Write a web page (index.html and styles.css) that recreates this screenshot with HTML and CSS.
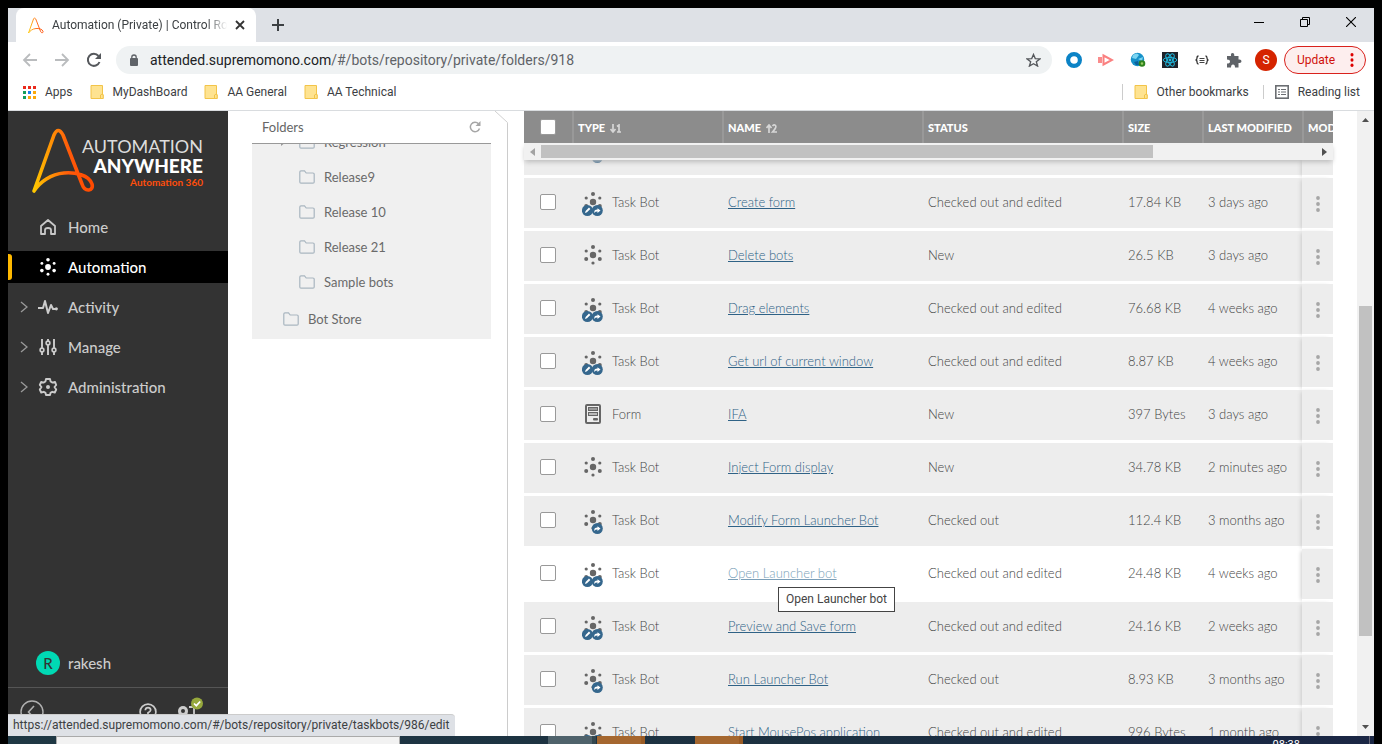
FILE: index.html
```html
<!DOCTYPE html>
<html lang="en">
<head>
<meta charset="utf-8">
<title>Automation (Private) | Control Room</title>
<link rel="stylesheet" href="styles.css">
</head>
<body>
<svg class="defs" aria-hidden="true">
  <defs>
    <linearGradient id="flame" x1="0" y1="0" x2="1" y2="0"><stop offset="0" stop-color="#ffc800"/><stop offset=".6" stop-color="#ff5a0a"/><stop offset="1" stop-color="#ff4a00"/></linearGradient>
    <symbol id="mark" viewBox="0 0 64 66"><path d="M2 63 22 7Q26-2 31 7L50 56C53 65 62 63 60 56 57 47 43 44 32 45 19 46 8 54 2 63Z" fill="none" stroke="url(#flame)" stroke-width="3.600" stroke-linejoin="round"/></symbol>
    <symbol id="note" viewBox="0 0 14 16"><path d="M1 1.500H12.500V10L13 10.500V14.500H1Z" fill="#fee391" stroke="#f2c449"/><path d="M10.500 14.500V11Q12 9.500 13.200 11V14.500Z" fill="#fee391" stroke="#f2c449"/></symbol>
    <symbol id="folder" viewBox="0 0 16 14"><path d="M.8 2Q.8.8 2 .8H5.500L7.200 3H14Q15.200 3 15.200 4V12Q15.200 13.200 14 13.200H2Q.8 13.200.8 12Z" fill="none" stroke="#a9b6c0" stroke-width="1.200"/></symbol>
    <symbol id="dots" viewBox="0 0 22 24"><circle cx="11" cy="10" r="3.200"/><circle cx="11" cy="2" r="2"/><circle cx="4.200" cy="6" r="1.600"/><circle cx="17.800" cy="6" r="1.600"/><circle cx="4.200" cy="14" r="2"/><circle cx="17.800" cy="14" r="2"/><circle cx="11" cy="18" r="1.600"/></symbol>
    <symbol id="share" viewBox="0 0 22 24"><circle cx="15.300" cy="18.500" r="5.500" fill="#35678d"/><path d="M12.300 21Q11.800 17.600 15.500 17.600V16.200L18.500 18.600 15.500 21V19.600Q13.500 19.400 12.300 21Z" fill="#fff"/></symbol>
    <symbol id="bot" viewBox="0 0 22 24"><use href="#dots" fill="#666"/></symbol>
    <symbol id="bot-out" viewBox="0 0 22 24"><use href="#dots" fill="#666"/><use href="#share"/></symbol>
    <symbol id="bot-edit" viewBox="0 0 22 24"><use href="#dots" fill="#666"/><circle cx="5.400" cy="18.500" r="5.500" fill="#35678d"/><path d="M3 21 3.600 19 7 15.600 8.300 17 5 20.300Z" fill="#fff"/><use href="#share"/></symbol>
    <symbol id="form" viewBox="0 0 22 24"><rect x="4" y="1" width="14" height="18" rx="1" fill="#eee" stroke="#666" stroke-width="2"/><rect x="6.500" y="3.500" width="9" height="3" fill="#999" stroke="#666"/><rect x="6.500" y="8.500" width="9" height="3" fill="#bbb" stroke="#666"/><rect x="11" y="14" width="5" height="2.500" rx="1" fill="#666"/></symbol>
    <symbol id="chev" viewBox="0 0 8 12"><path d="M1 1 7 6 1 11" fill="none" stroke="#9a9a9a" stroke-width="1.300"/></symbol>
    <symbol id="more" viewBox="0 0 4 16"><circle cx="2" cy="2" r="1.900"/><circle cx="2" cy="8" r="1.900"/><circle cx="2" cy="14" r="1.900"/></symbol>
  </defs>
</svg>

<div class="window">
  <header class="tabstrip">
    <div class="tab">
      <svg width="16" height="17"><use href="#mark"/></svg>
      <span class="tab-title">Automation (Private) | Control Room</span>
      <button class="plain" aria-label="Close tab"><svg width="10" height="10" viewBox="0 0 10 10"><path d="M1 1 9 9M9 1 1 9" stroke="#333" stroke-width="1.800"/></svg></button>
    </div>
    <button class="plain new-tab" aria-label="New tab"><svg width="12" height="12" viewBox="0 0 12 12"><path d="M6 0V12M0 6H12" stroke="#3c4043" stroke-width="2"/></svg></button>
    <div class="win-controls">
      <button class="plain" aria-label="Minimize"><svg width="10" height="10" viewBox="0 0 10 10"><path d="M0 5.500H10" stroke="#000"/></svg></button>
      <button class="plain" aria-label="Restore"><svg width="10" height="10" viewBox="0 0 10 10"><path d="M.5 2.500H7.500V9.500H.5ZM2.500 2.500V.5H9.500V7.500H7.500" fill="none" stroke="#000"/></svg></button>
      <button class="plain" aria-label="Close"><svg width="10" height="10" viewBox="0 0 10 10"><path d="M0 0 10 10M10 0 0 10" stroke="#000" stroke-width="1.100"/></svg></button>
    </div>
  </header>

  <div class="toolbar">
    <div class="history">
      <button class="plain" aria-label="Back"><svg width="16" height="14" viewBox="0 0 16 14"><path d="M8 1 2 7 8 13M2 7H15" fill="none" stroke="#babcbe" stroke-width="1.800"/></svg></button>
      <button class="plain" aria-label="Forward"><svg width="16" height="14" viewBox="0 0 16 14"><path d="M8 1 14 7 8 13M14 7H1" fill="none" stroke="#babcbe" stroke-width="1.800"/></svg></button>
      <button class="plain" aria-label="Reload"><svg width="16" height="16" viewBox="0 0 16 16"><path d="M13.500 10A6 6 0 1 1 12.500 4" fill="none" stroke="#55585c" stroke-width="2"/><path d="M15 1V7H9Z" fill="#55585c"/></svg></button>
    </div>
    <div class="omnibox">
      <svg width="10" height="13" viewBox="0 0 10 13"><rect x="1" y="4" width="8" height="8" rx="1" fill="#5f6368"/><path d="M2.800 5V3.200a2.200 2.200 0 0 1 4.400 0V5" fill="none" stroke="#5f6368" stroke-width="1.300"/></svg>
      <span class="url"><b>attended.supremomono.com</b>/#/bots/repository/private/folders/918</span>
      <button class="plain" aria-label="Bookmark this page"><svg width="15" height="14" viewBox="0 0 16 15"><path d="M8 1.500 9.900 6 15 6.300 11 9.400 12.400 14 8 11.400 3.600 14 5 9.400 1 6.300 6.100 6Z" fill="none" stroke="#55585c" stroke-width="1.400"/></svg></button>
    </div>
    <div class="extensions">
      <svg width="16" height="16" viewBox="0 0 16 16"><circle cx="8" cy="8" r="5.900" fill="#fff" stroke="#0b83c6" stroke-width="4.200"/></svg>
      <svg width="16" height="14" viewBox="0 0 16 14"><path d="M0 4H4V10H0Z" fill="#fa8c8c"/><path d="M5.500 2.500 14 7 5.500 11.500Z" fill="none" stroke="#fa8080" stroke-width="2"/></svg>
      <svg width="16" height="16" viewBox="0 0 16 16"><circle cx="7.500" cy="7.500" r="6.700" fill="#1691c9"/><path d="M3 3Q7 0 9 3L6 7 2 6ZM8 7 13 5 12 9Z" fill="#7bd4f1"/><path d="M4 10 8 9 9 13 6 13Z" fill="#0b609c"/><circle cx="12" cy="11.500" r="2.300" fill="#9c6" stroke="#2e831d" stroke-width="2"/></svg>
      <svg width="16" height="16" viewBox="0 0 16 16"><rect width="16" height="16" fill="#20232a"/><g fill="none" stroke="#20b7dc"><ellipse cx="8" cy="8" rx="6.800" ry="2.600"/><ellipse cx="8" cy="8" rx="6.800" ry="2.600" transform="rotate(60 8 8)"/><ellipse cx="8" cy="8" rx="6.800" ry="2.600" transform="rotate(120 8 8)"/></g><circle cx="8" cy="8" r="1.400" fill="#20b7dc"/></svg>
      <svg width="16" height="10" viewBox="0 0 16 10"><path d="M4.500 1Q3 1 3 3T1.500 5Q3 5 3 7T4.500 9M11.500 1Q13 1 13 3T14.500 5Q13 5 13 7T11.500 9" fill="none" stroke="#333" stroke-width="1.300"/><path d="M5.500 3.500H10.500M5.500 5.500H10.500M5.500 7.500H10.500" stroke="#444"/></svg>
      <svg width="16" height="15" viewBox="0 0 16 15"><path d="M1 3H5Q4.500 0 6.500 0T8.300 3H12.500V6.500Q15.500 6 15.500 8.300T12.500 10V14.500H9Q9 11.500 7 11.500T5 14.500H1V10.500Q4 10.500 4 8.500T1 6.500Z" fill="#5f6368"/></svg>
    </div>
    <button class="avatar-s">S</button>
    <button class="update">Update <svg width="4" height="14" viewBox="0 0 4 16" fill="#d00"><use href="#more"/></svg></button>
  </div>

  <nav class="bookmarks">
    <a href="#" class="apps"><svg width="13" height="13" viewBox="0 0 13 13"><path d="M0 0h3v3H0zM5 0h3v3H5zM10 0h3v3h-3z" fill="#ea2a1c"/><path d="M0 5h3v3H0zM0 10h3v3H0z" fill="#149e5c"/><path d="M5 5h3v3H5z" fill="#1a80ee"/><path d="M10 5h3v3h-3zM5 10h3v3H5zM10 10h3v3h-3z" fill="#fba90a"/></svg>Apps</a>
    <a href="#"><svg width="14" height="16"><use href="#note"/></svg>MyDashBoard</a>
    <a href="#"><svg width="14" height="16"><use href="#note"/></svg>AA General</a>
    <a href="#"><svg width="14" height="16"><use href="#note"/></svg>AA Technical</a>
    <a href="#" class="other"><svg width="14" height="16"><use href="#note"/></svg>Other bookmarks</a>
    <a href="#" class="reading"><svg width="14" height="14" viewBox="0 0 14 14"><rect x=".8" y=".8" width="12.400" height="12.400" fill="none" stroke="#6b6e72" stroke-width="1.600"/><path d="M3 4.500H5M3 7H5M3 9.500H5M6 4.500H11M6 7H11M6 9.500H11" stroke="#6b6e72" stroke-width="1.200"/></svg>Reading list</a>
  </nav>

  <div class="app">
    <aside class="sidebar">
      <div class="logo">
        <svg width="64" height="66"><use href="#mark"/></svg>
        <div class="wordmark"><span class="w1">AUTOMATION</span><span class="w2">ANYWHERE</span><span class="w3">Automation 360</span></div>
      </div>
      <nav class="menu">
        <a href="#"><i></i><svg width="20" height="18" viewBox="0 0 20 18"><path d="M3 8 10 2 17 8V16H13V12Q13 10 10 10T7 12V16H3Z" fill="none" stroke="#c8c8c8" stroke-width="1.800" stroke-linejoin="round"/></svg>Home</a>
        <a href="#" class="active"><i></i><svg width="20" height="18" viewBox="1 0 20 20" fill="#fff"><use href="#dots" width="22" height="24"/></svg>Automation</a>
        <a href="#"><i><svg width="8" height="12"><use href="#chev"/></svg></i><svg width="20" height="16" viewBox="0 0 20 16"><path d="M0 9H5L7 2 10 14 13 6 15 10H18" fill="none" stroke="#ccc" stroke-width="2" stroke-linejoin="round"/><circle cx="18.300" cy="9.800" r="1.600" fill="#ccc"/></svg>Activity</a>
        <a href="#"><i><svg width="8" height="12"><use href="#chev"/></svg></i><svg width="20" height="16" viewBox="0 0 20 16"><path d="M4 0V9M4 13V16M10 0V2M10 6V16M16 0V9M16 13V16" stroke="#ccc" stroke-width="1.900"/><g fill="none" stroke="#ccc" stroke-width="1.600"><circle cx="4" cy="11" r="1.900"/><circle cx="10" cy="4" r="1.900"/><circle cx="16" cy="11" r="1.900"/></g></svg>Manage</a>
        <a href="#"><i><svg width="8" height="12"><use href="#chev"/></svg></i><svg width="20" height="18" viewBox="0 0 20 18"><path d="M8 1H12L12.600 3.500 14.500 4.600 17 3.900 18.200 7 16.500 9 18.200 11.500 16.800 14.500 14.300 13.800 12.500 14.900 12 17H8L7.500 14.900 5.700 13.800 3.200 14.500 1.800 11.500 3.500 9 1.800 7 3.200 3.900 5.500 4.600 7.400 3.500Z" fill="none" stroke="#ccc" stroke-width="1.900" stroke-linejoin="round"/><circle cx="10" cy="9" r="2" fill="#ccc"/></svg>Administration</a>
      </nav>
      <div class="user"><span class="avatar">R</span>rakesh</div>
      <div class="side-foot">
        <button class="plain" aria-label="Collapse"><svg width="24" height="24" viewBox="0 0 24 24"><circle cx="12" cy="12" r="11" fill="none" stroke="#b0b0b0" stroke-width="1.400"/><path d="M14 6 8.500 12 14 18" fill="none" stroke="#b0b0b0" stroke-width="1.600"/></svg></button>
        <button class="plain help" aria-label="Help"><svg width="18" height="18" viewBox="0 0 18 18"><circle cx="9" cy="9" r="7.900" fill="none" stroke="#ccc" stroke-width="1.700"/><path d="M6.300 7.200Q6.500 4.600 9 4.600T11.700 7Q11.700 8.300 9 9.800V11.300" fill="none" stroke="#ccc" stroke-width="1.700"/><circle cx="9" cy="13.500" r="1" fill="#ccc"/></svg></button>
        <button class="plain" aria-label="Connection"><svg width="27" height="30" viewBox="0 0 27 30"><path d="M6 25Q1 18 1 14A5 5 0 0 1 11 14Q11 18 6 25Z" fill="#ccc"/><circle cx="6" cy="14" r="2" fill="#333"/><path d="M12 10H17V24" fill="none" stroke="#ccc" stroke-width="1.800"/><circle cx="20" cy="6.500" r="6" fill="#96a83c"/><path d="M17 6.500 19.300 8.700 23.200 4.500" fill="none" stroke="#fff" stroke-width="1.700"/></svg></button>
      </div>
    </aside>

    <section class="folders">
      <div class="folders-head"><h2>Folders</h2><button class="plain" aria-label="Refresh"><svg width="12" height="12" viewBox="0 0 12 12"><path d="M10.500 7.500A4.700 4.700 0 1 1 9.500 2.800" fill="none" stroke="#a6a6a6" stroke-width="1.500"/><path d="M11.500 0V5H6.500Z" fill="#a6a6a6"/></svg></button></div>
      <div class="tree-view">
        <ul class="tree">
          <li><i><svg width="5" height="8" viewBox="0 0 5 8"><path d="M0 0 5 4 0 8Z" fill="#999"/></svg></i><svg width="16" height="14"><use href="#folder"/></svg>Regression</li>
          <li><i></i><svg width="16" height="14"><use href="#folder"/></svg>Release9</li>
          <li><i></i><svg width="16" height="14"><use href="#folder"/></svg>Release 10</li>
          <li><i></i><svg width="16" height="14"><use href="#folder"/></svg>Release 21</li>
          <li><i></i><svg width="16" height="14"><use href="#folder"/></svg>Sample bots</li>
          <li class="root"><svg width="16" height="14"><use href="#folder"/></svg>Bot Store</li>
        </ul>
      </div>
    </section>

    <div class="divider"><svg width="13" height="13" viewBox="0 0 13 13"><path d="M0 0 12.500 11.500V13" fill="none" stroke="#d0d0d0"/></svg><span></span></div>

    <main class="list">
      <table class="grid head">
        <colgroup><col class="c-check"><col class="c-type"><col><col><col class="c-size"><col class="c-date"><col class="c-more"></colgroup>
        <thead><tr>
          <th><input type="checkbox" aria-label="Select all"></th>
          <th>TYPE <svg width="11" height="9" viewBox="0 0 11 9" fill="none" stroke="#d6d6d6" stroke-width="1.700"><path d="M3 0V8M.5 5 3 8 5.500 5M7 2.500 9 1V8M7 8H11"/></svg></th>
          <th>NAME <svg width="11" height="9" viewBox="0 0 11 9" fill="none" stroke="#d6d6d6" stroke-width="1.700"><path d="M3 9V1M.5 4 3 1 5.500 4M6.500 2Q8 0 9.500 1.500T6.500 8H11"/></svg></th>
          <th>STATUS</th><th>SIZE</th><th>LAST MODIFIED</th><th>MODIFIED BY</th>
        </tr></thead>
      </table>
      <div class="hscroll"><svg width="5" height="8" viewBox="0 0 5 8"><path d="M5 0 0 4 5 8Z" fill="#a3a3a3"/></svg><div class="htrack"><div class="hthumb"></div></div><svg width="5" height="8" viewBox="0 0 5 8"><path d="M0 0 5 4 0 8Z" fill="#505050"/></svg></div>
      <div class="rows">
        <table class="grid body">
          <colgroup><col class="c-check"><col class="c-type"><col><col><col class="c-size"><col class="c-date"><col class="c-more"></colgroup>
          <tbody>
            <tr><td></td><td><div class="kind"><svg class="ico"><use href="#bot-out"/></svg></div></td><td></td><td></td><td></td><td></td><td></td></tr>
            <tr><td><input type="checkbox" aria-label="Create form"></td><td><div class="kind"><svg class="ico"><use href="#bot-edit"/></svg>Task Bot</div></td><td><a href="#">Create form</a></td><td>Checked out and edited</td><td>17.84 KB</td><td>3 days ago</td><td><button class="plain" aria-label="Actions"><svg width="4" height="16"><use href="#more"/></svg></button></td></tr>
            <tr><td><input type="checkbox" aria-label="Delete bots"></td><td><div class="kind"><svg class="ico"><use href="#bot"/></svg>Task Bot</div></td><td><a href="#">Delete bots</a></td><td>New</td><td>26.5 KB</td><td>3 days ago</td><td><button class="plain" aria-label="Actions"><svg width="4" height="16"><use href="#more"/></svg></button></td></tr>
            <tr><td><input type="checkbox" aria-label="Drag elements"></td><td><div class="kind"><svg class="ico"><use href="#bot-edit"/></svg>Task Bot</div></td><td><a href="#">Drag elements</a></td><td>Checked out and edited</td><td>76.68 KB</td><td>4 weeks ago</td><td><button class="plain" aria-label="Actions"><svg width="4" height="16"><use href="#more"/></svg></button></td></tr>
            <tr><td><input type="checkbox" aria-label="Get url of current window"></td><td><div class="kind"><svg class="ico"><use href="#bot-edit"/></svg>Task Bot</div></td><td><a href="#">Get url of current window</a></td><td>Checked out and edited</td><td>8.87 KB</td><td>4 weeks ago</td><td><button class="plain" aria-label="Actions"><svg width="4" height="16"><use href="#more"/></svg></button></td></tr>
            <tr><td><input type="checkbox" aria-label="IFA"></td><td><div class="kind"><svg class="ico"><use href="#form"/></svg>Form</div></td><td><a href="#">IFA</a></td><td>New</td><td>397 Bytes</td><td>3 days ago</td><td><button class="plain" aria-label="Actions"><svg width="4" height="16"><use href="#more"/></svg></button></td></tr>
            <tr><td><input type="checkbox" aria-label="Inject Form display"></td><td><div class="kind"><svg class="ico"><use href="#bot"/></svg>Task Bot</div></td><td><a href="#">Inject Form display</a></td><td>New</td><td>34.78 KB</td><td>2 minutes ago</td><td><button class="plain" aria-label="Actions"><svg width="4" height="16"><use href="#more"/></svg></button></td></tr>
            <tr><td><input type="checkbox" aria-label="Modify Form Launcher Bot"></td><td><div class="kind"><svg class="ico"><use href="#bot-out"/></svg>Task Bot</div></td><td><a href="#">Modify Form Launcher Bot</a></td><td>Checked out</td><td>112.4 KB</td><td>3 months ago</td><td><button class="plain" aria-label="Actions"><svg width="4" height="16"><use href="#more"/></svg></button></td></tr>
            <tr class="hovered"><td><input type="checkbox" aria-label="Open Launcher bot"></td><td><div class="kind"><svg class="ico"><use href="#bot-edit"/></svg>Task Bot</div></td><td><a href="#">Open Launcher bot</a><span class="tooltip" role="tooltip">Open Launcher bot</span></td><td>Checked out and edited</td><td>24.48 KB</td><td>4 weeks ago</td><td><button class="plain" aria-label="Actions"><svg width="4" height="16"><use href="#more"/></svg></button></td></tr>
            <tr><td><input type="checkbox" aria-label="Preview and Save form"></td><td><div class="kind"><svg class="ico"><use href="#bot-edit"/></svg>Task Bot</div></td><td><a href="#">Preview and Save form</a></td><td>Checked out and edited</td><td>24.16 KB</td><td>2 weeks ago</td><td><button class="plain" aria-label="Actions"><svg width="4" height="16"><use href="#more"/></svg></button></td></tr>
            <tr><td><input type="checkbox" aria-label="Run Launcher Bot"></td><td><div class="kind"><svg class="ico"><use href="#bot-out"/></svg>Task Bot</div></td><td><a href="#">Run Launcher Bot</a></td><td>Checked out</td><td>8.93 KB</td><td>3 months ago</td><td><button class="plain" aria-label="Actions"><svg width="4" height="16"><use href="#more"/></svg></button></td></tr>
            <tr><td><input type="checkbox" aria-label="Start MousePos application"></td><td><div class="kind"><svg class="ico"><use href="#bot-edit"/></svg>Task Bot</div></td><td><a href="#">Start MousePos application</a></td><td>Checked out and edited</td><td>996 Bytes</td><td>1 month ago</td><td><button class="plain" aria-label="Actions"><svg width="4" height="16"><use href="#more"/></svg></button></td></tr>
          </tbody>
        </table>
      </div>
    </main>

    <div class="vscroll"><svg width="7" height="4" viewBox="0 0 7 4"><path d="M0 4 3.500 0 7 4Z" fill="#505050"/></svg><div class="vtrack"><div class="vthumb"></div></div><svg width="7" height="4" viewBox="0 0 7 4"><path d="M0 0 3.500 4 7 0Z" fill="#505050"/></svg></div>
    <div class="status">https://attended.supremomono.com/#/bots/repository/private/taskbots/986/edit</div>
  </div>
</div>
<footer class="taskbar">
  <div class="search"></div>
  <div class="task grey"></div><div class="task"></div><div class="task last"></div>
  <time>08:38</time>
</footer>
</body>
</html>
```
FILE: styles.css
```css
* { box-sizing: border-box; }
body {
  margin: 0;
  padding: 8px 8px 0;
  height: 100vh;
  display: flex;
  flex-direction: column;
  overflow: hidden;
  background: #000;
  font-family: Roboto, "Noto Sans", sans-serif;
  font-size: 12px;
  color: #3c4043;
}
svg { display: block; flex: none; }
a { color: inherit; text-decoration: none; }
i { font-style: normal; }
.defs { position: absolute; width: 0; height: 0; }
.plain { border: 0; padding: 0; background: none; display: flex; flex: none; }
.window { flex: 1; min-height: 0; display: flex; flex-direction: column; background: #fff; }

.tabstrip { display: flex; align-items: center; height: 34px; flex: none; background: #dee1e6; padding-left: 8px; }
.tab { display: flex; align-items: center; gap: 8px; width: 240px; height: 34px; padding: 0 11px 0 12px; background: #fff; border-radius: 8px 8px 0 0; }
.tab-title { flex: 1; overflow: hidden; white-space: nowrap; -webkit-mask-image: linear-gradient(90deg, #000 88%, transparent); mask-image: linear-gradient(90deg, #000 88%, transparent); }
.new-tab { margin-left: 16px; }
.win-controls { display: flex; gap: 36px; margin: 0 18px 6px auto; }

.toolbar { display: flex; align-items: center; height: 36px; flex: none; padding: 0 8px 0 14px; }
.history { display: flex; align-items: center; gap: 16px; }
.omnibox { flex: 1; display: flex; align-items: center; gap: 11px; height: 28px; margin-left: 14px; padding: 0 11px 0 13px; border-radius: 14px; background: #eff2f3; font-size: 14px; color: #5f6368; }
.url { flex: 1; white-space: nowrap; }
.url b { font-weight: 400; color: #202124; }
.extensions { display: flex; align-items: center; gap: 16px; margin: 0 13px 0 14px; }
.avatar-s { width: 22px; height: 22px; padding: 0; border: 0; border-radius: 50%; background: #d52400; color: #fff; font: 12px Roboto, sans-serif; }
.update { display: flex; align-items: center; justify-content: space-between; width: 82px; height: 28px; margin-left: 7px; padding: 0 11px 0 12px; border: 1px solid #d9211c; border-radius: 14px; background: #fdeeee; color: #d0110b; font: 12px Roboto, sans-serif; }

.bookmarks { display: flex; align-items: center; height: 33px; flex: none; padding: 0 14px 4px 15px; border-bottom: 1px solid #d9dcdf; }
.bookmarks a { display: flex; align-items: center; gap: 9px; margin-right: 17px; white-space: nowrap; }
.bookmarks .other, .bookmarks .reading { margin-right: 0; padding-left: 11px; border-left: 1px solid #ccc; }
.bookmarks .other { margin-left: auto; margin-right: 14px; }

.app { position: relative; flex: 1; min-height: 0; display: flex; overflow: hidden; font-family: Lato, "Open Sans", sans-serif; }
.sidebar { width: 220px; flex: none; display: flex; flex-direction: column; background: #333; color: #ccc; font-size: 15px; font-weight: 500; }
.logo { display: flex; align-items: flex-start; height: 100px; padding: 17px 25px 0 24px; }
.wordmark { flex: 1; display: flex; flex-direction: column; align-items: flex-end; padding-top: 8px; line-height: 20px; white-space: nowrap; margin-left: -24px; }
.w1 { font-size: 18px; font-weight: 400; color: #ddd; }
.w2 { font-size: 19px; font-weight: 900; color: #fff; }
.w3 { font-size: 10px; font-weight: 700; line-height: 12px; color: #ff4e0b; }
.menu { display: flex; flex-direction: column; gap: 8px; }
.menu a { display: flex; align-items: center; height: 32px; padding: 0 0 1px 12px; }
.menu i { width: 18px; }
.menu a > svg { margin-right: 10px; }
.menu .active { background: #000; color: #fff; }
.menu .active i { width: 4px; height: 26px; margin: 0 26px 0 -12px; border-radius: 0 3px 3px 0; background: #ffb900; }
.user { display: flex; align-items: center; gap: 8px; margin-top: auto; height: 48px; padding-left: 28px; }
.avatar { width: 24px; height: 24px; border-radius: 50%; background: #00d9b4; color: #333; text-align: center; line-height: 24px; }
.side-foot { display: flex; align-items: center; height: 49px; padding: 0 24px 0 12px; border-top: 1px solid #555; }
.help { margin-left: auto; margin-right: 20px; }

.folders { width: 239px; flex: none; margin-left: 24px; }
.folders-head { display: flex; align-items: center; justify-content: space-between; height: 33px; padding: 0 10px; border-bottom: 1px solid #999; }
.folders-head h2 { margin: 0; font-size: 13px; font-weight: 400; color: #666; }
.tree-view { height: 195px; overflow: hidden; background: #f0f0f0; }
.tree { margin: -20px 0 0; padding: 0; list-style: none; font-size: 13px; color: #6a6a6a; }
.tree li { display: flex; align-items: center; gap: 9px; height: 35px; padding-left: 29px; }
.tree i { width: 9px; }
.tree .root { height: 39px; padding-left: 31px; }

.divider { display: flex; flex-direction: column; width: 13px; flex: none; margin-left: 4px; }
.divider span { flex: 1; border-right: 1px solid #ccc; }

.list { flex: 1; min-width: 0; display: flex; flex-direction: column; margin: 0 24px 0 16px; }
.grid { width: 100%; table-layout: fixed; border-collapse: separate; border-spacing: 0; font-size: 13px; color: #6a6a6a; }
.c-check { width: 48px; }
.c-type { width: 150px; }
.c-size { width: 80px; }
.c-date { width: 100px; }
.c-more { width: 31px; }
.head { background: #8c8c8c; color: #fff; }
.head th { height: 32px; padding: 0 0 0 6px; text-align: left; font-size: 11px; font-weight: 900; white-space: nowrap; overflow: hidden; }
.head th + th { border-left: 2px solid #999; padding-left: 4px; }
.head svg { display: inline-block; margin-left: 2px; vertical-align: -1px; }
.grid input { appearance: none; display: block; width: 16px; height: 16px; margin: 0 auto; border: 1px solid #999; border-radius: 2px; background: #fff; }
.head input { margin-left: 10px; }
.hscroll { position: relative; z-index: 1; display: flex; align-items: center; gap: 6px; height: 17px; flex: none; padding: 0 6px; background: #f1f1f1; box-shadow: 0 3px 5px -1px #bbb; }
.htrack { flex: 1; }
.hthumb { width: 79%; height: 13px; background: #c1c1c1; }
.rows { flex: 1; min-height: 0; overflow: hidden; }
.body { margin-top: -35px; font-weight: 300; color: #444; }
.body td { height: 53px; padding: 0 0 2px 6px; border-bottom: 3px solid #fff; background: #ededed; white-space: nowrap; position: relative; }
.body td:first-child, .body td:last-child { padding: 0; }
.body td:first-child { padding-bottom: 2px; }
.body td:last-child { background-clip: padding-box; box-shadow: -3px 0 4px -2px #ccc; }
.body .plain { margin: 2px auto 0; fill: #a6a6a6; }
.body .hovered td { background: #fff; }
.body .hovered td:last-child { background: #ededed; background-clip: padding-box; }
.body a { color: #2f6286; text-decoration: underline; }
.body .hovered a { color: #7b9fb8; }
.kind { display: flex; align-items: center; gap: 8px; padding-left: 4px; }
.ico { width: 22px; height: 24px; margin-top: 4px; }
.tooltip { position: absolute; left: 56px; top: 38px; z-index: 2; padding: 0 7px; line-height: 23px; border: 1px solid #444; background: #fff; color: #444; font-family: Roboto, sans-serif; font-weight: 400; font-size: 12px; }

.vscroll { width: 17px; flex: none; display: flex; flex-direction: column; align-items: center; gap: 7px; padding: 7px 0; background: #f1f1f1; }
.vtrack { flex: 1; display: flex; flex-direction: column; width: 100%; padding: 0 2px; }
.vthumb { height: 56%; margin-top: 177px; background: #c1c1c1; }
.status { position: absolute; left: 0; bottom: 0; padding: 0 6px 0 5px; line-height: 21px; background: #dee1e6; border-top: 1px solid #ccc; border-radius: 0 4px 0 0; font-family: Roboto, sans-serif; font-size: 12px; }

.taskbar { display: flex; height: 8px; flex: none; overflow: hidden; padding-left: 48px; background: linear-gradient(90deg, #1f3844, #1c3040 60%, #1a2644); }
.search { width: 344px; background: #f2f2f2; border: 1px solid #aaa; border-bottom: 0; }
.task { width: 48px; background: #a5672f; border-right: 4px solid #995b25; }
.task.grey { margin-left: 148px; margin-right: 1px; background: #4f626b; border-color: #34474f; }
.task.last { margin-left: 50px; }
.taskbar time { margin-left: auto; padding: 2px 69px 0 0; margin-right: 4px; border-right: 1px solid #667; color: #fff; line-height: 14px; font-size: 11px; }
```
